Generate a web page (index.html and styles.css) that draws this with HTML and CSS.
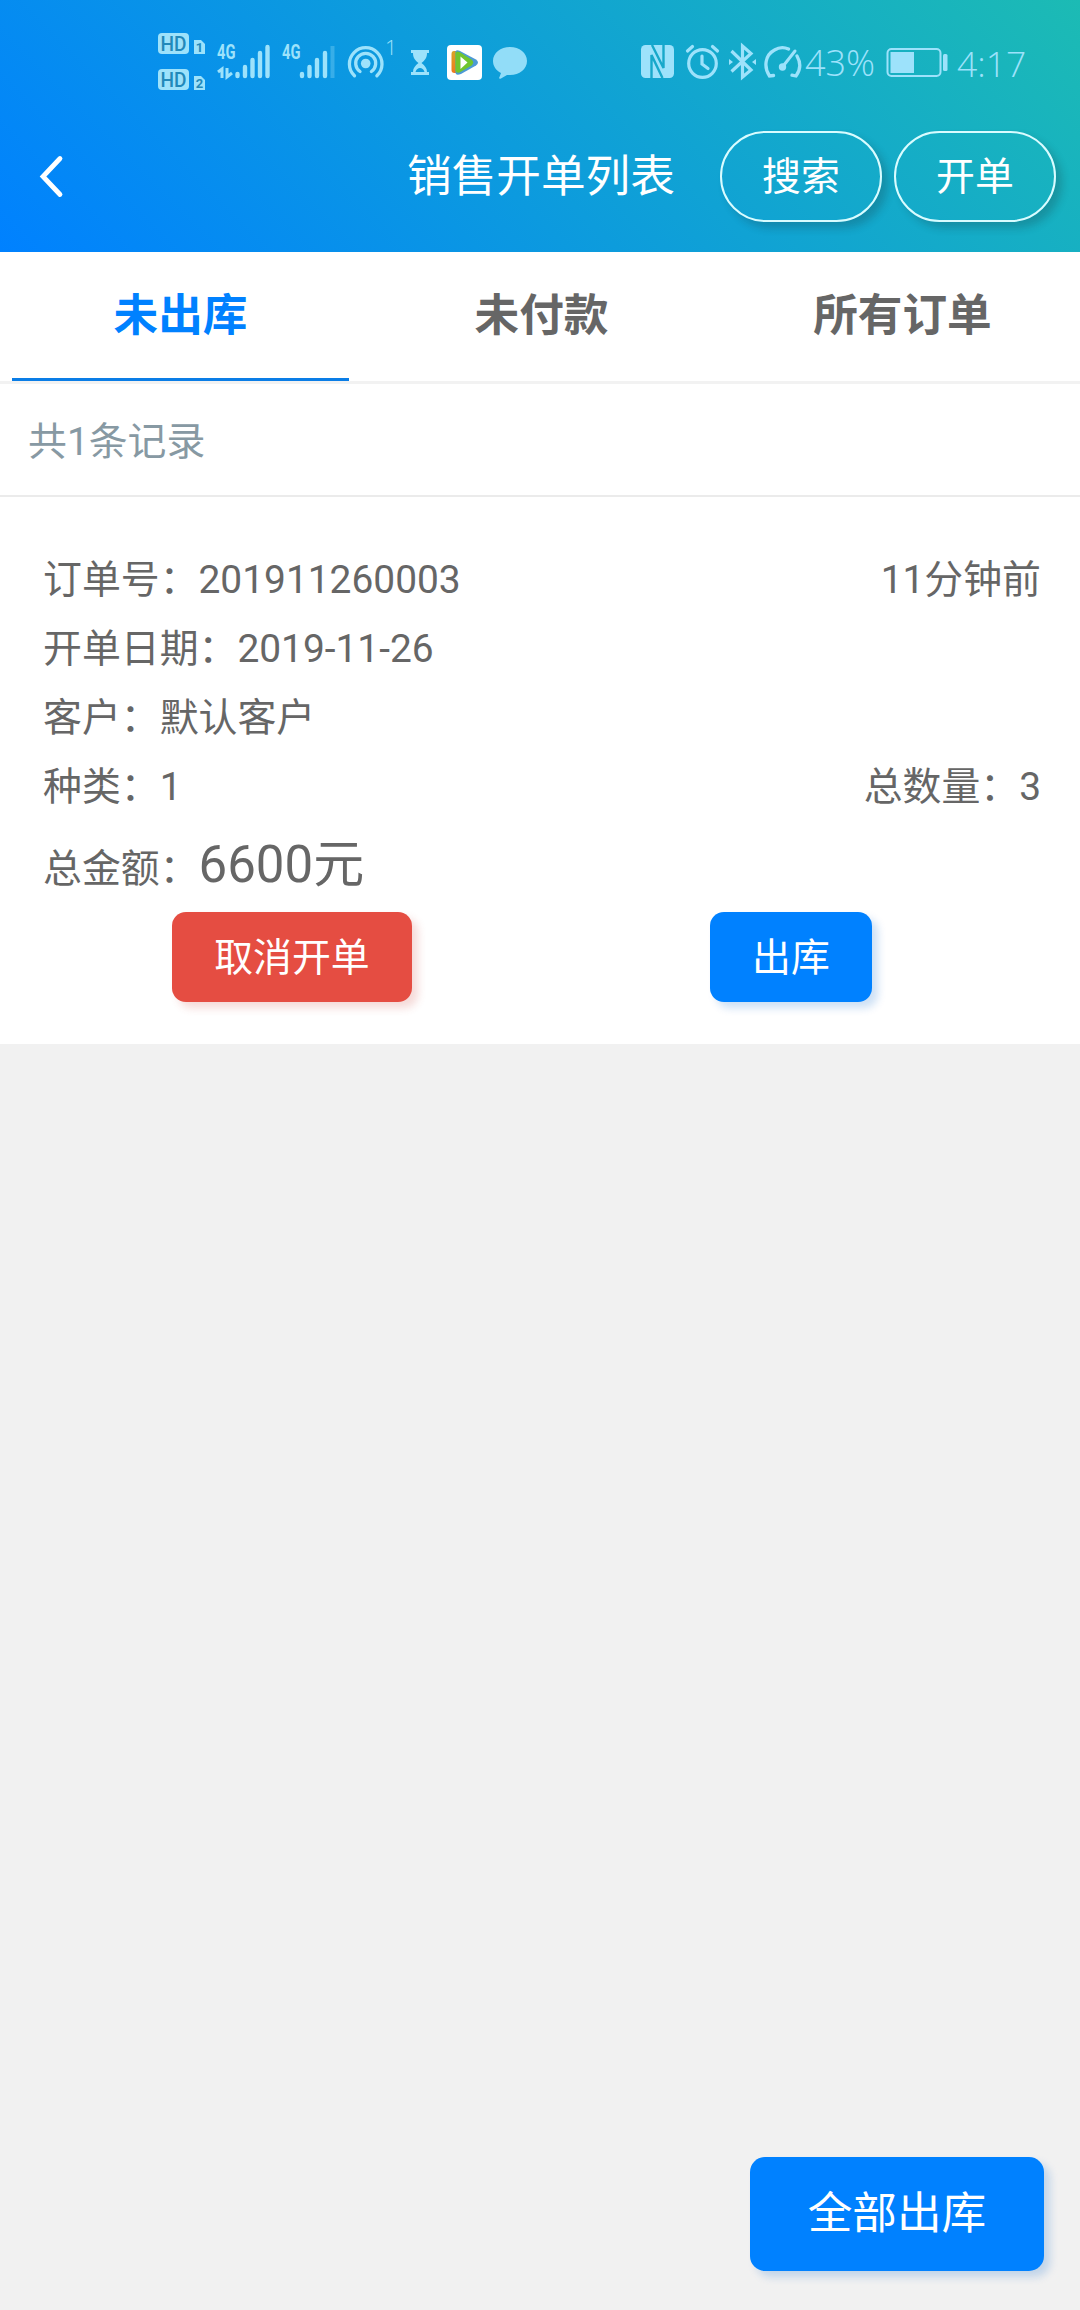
FILE: index.html
```html
<!DOCTYPE html>
<html lang="zh-CN">
<head>
<meta charset="utf-8">
<title>销售开单列表</title>
<link rel="stylesheet" href="styles.css">
</head>
<body>
<header class="header">
  <div class="status">
    <svg width="60" height="80" viewBox="150 20 60 80">
      <rect x="158" y="33" width="31" height="21" rx="4" fill="currentColor"/>
      <text x="173.500" y="50.500" class="hd" text-anchor="middle" textLength="26" lengthAdjust="spacingAndGlyphs">HD</text>
      <path d="M194 40h7l4 4v10h-11z" fill="currentColor"/>
      <text x="199.500" y="52" class="sim" text-anchor="middle">1</text>
      <rect x="158" y="69" width="31" height="21" rx="4" fill="currentColor"/>
      <text x="173.500" y="86.500" class="hd" text-anchor="middle" textLength="26" lengthAdjust="spacingAndGlyphs">HD</text>
      <path d="M194 76h7l4 4v10h-11z" fill="currentColor"/>
      <text x="199.500" y="88" class="sim" text-anchor="middle">2</text>
    </svg>
    <svg width="65" height="80" viewBox="210 20 65 80">
      <text x="217" y="59" class="net" textLength="18.500" lengthAdjust="spacingAndGlyphs">4G</text>
      <path d="M218 72l4-3v9M227 68v9l5-4" fill="none" stroke="currentColor" stroke-width="3"/>
      <path d="M237.500 74v2M245 67v9M252.500 60v16M260 53v23M267.500 47v29" stroke="currentColor" stroke-width="4.400" stroke-linecap="round"/>
    </svg>
    <svg width="65" height="80" viewBox="275 20 65 80">
      <text x="282" y="59" class="net" textLength="18.500" lengthAdjust="spacingAndGlyphs">4G</text>
      <path d="M302 74v2M309.500 67v9M317 60v16M325 53v23" stroke="currentColor" stroke-width="4.400" stroke-linecap="round"/>
      <path d="M332.500 46v32" stroke="currentColor" stroke-width="4" opacity=".3"/>
    </svg>
    <svg width="60" height="80" viewBox="340 20 60 80">
      <circle cx="365.700" cy="63.500" r="4.800" fill="currentColor"/>
      <path d="M360 71.500a10 10 0 1 1 11.400 0M354.500 75.800a16.300 16.300 0 1 1 22.400 0" fill="none" stroke="currentColor" stroke-width="3.300" stroke-linecap="round"/>
      <text x="385" y="55" class="thin-small">1</text>
    </svg>
    <svg width="40" height="80" viewBox="400 20 40 80">
      <path d="M411 50h18v3h-2c0 5-2 7-5.500 10 3.500 3 5.500 5 5.500 9h2v3h-18v-3h2c0-4 2-6 5.500-9-3.500-3-5.500-5-5.500-10h-2zM415.500 72h9c-1-3-2.500-4-4.500-4s-3.500 1-4.500 4z" fill="currentColor" fill-rule="evenodd"/>
    </svg>
    <svg width="50" height="80" viewBox="440 20 50 80">
      <defs>
        <linearGradient id="play-left" x1="0" y1="0" x2="0" y2="1"><stop offset="0" stop-color="#d9a426"/><stop offset="1" stop-color="#f0781e"/></linearGradient>
      </defs>
      <rect x="447" y="45" width="35" height="35" rx="4" fill="#fff"/>
      <path d="M454 51q-2.500 0-2.500 3v16q0 3 3 3h5v-22z" fill="url(#play-left)"/>
      <path d="M455.500 51.500q1-2 4-.8l16.500 8.800q4 3 0 6l-15 8.500q-5 2-5.500-1z" fill="#4d9ad5"/>
      <path d="M455.500 53q1-2.500 4-1l12 7.500q3.500 3 0 6l-12 7q-3.500 1-4-2z" fill="#70c52f"/>
      <path d="M460.500 56.500l7 6-7 6.500z" fill="#fff"/>
    </svg>
    <svg width="60" height="80" viewBox="490 20 60 80">
      <path d="M510 47c9.500 0 17 6 17 14s-7.500 14-17 14h-3l-6 3.500c-1.500.8-2.500 0-1.500-1.500l1.500-4c-5-2.500-8-7-8-12 0-8 7.500-14 17-14z" fill="currentColor" opacity=".92"/>
    </svg>
    <svg class="status-right" width="50" height="80" viewBox="635 20 50 80">
      <rect x="641" y="45" width="33" height="33" rx="4.500" fill="currentColor"/>
      <path d="M651.500 78V55l11 23M663.500 45v23L652 45" fill="none" stroke="#18a8ca" stroke-width="2.400" stroke-linejoin="bevel"/>
    </svg>
    <svg width="40" height="80" viewBox="685 20 40 80">
      <g fill="none" stroke="currentColor" stroke-width="3.200" stroke-linecap="round">
        <circle cx="702.500" cy="63.500" r="13.800"/>
        <path d="M702 56v8l6 4.500M687.500 51l5-4.500M717.500 51l-5-4.500"/>
      </g>
    </svg>
    <svg width="36" height="80" viewBox="725 20 36 80">
      <path d="M731.500 51l19.500 19-8.500 7v-31l8.500 7.500-19.500 18" fill="none" stroke="currentColor" stroke-width="3.200"/>
      <path d="M729 59l4 3-4 3zM756 59l-4 3 4 3z" fill="currentColor"/>
    </svg>
    <svg width="42" height="80" viewBox="761 20 42 80">
      <g fill="none" stroke="currentColor" stroke-width="3.300" stroke-linecap="round">
        <path d="M773.500 75.500l-4 .5c-6-9-4.500-21 5-26 4.500-2.800 9.500-3 14-1M797 56c4 7 3.500 14-1 20l-4-.8"/>
        <path d="M784 65l11-14" stroke-width="3"/>
      </g>
      <circle cx="782.500" cy="67" r="3.700" fill="currentColor"/>
    </svg>
    <span class="pct">43%</span>
    <svg width="74" height="80" viewBox="880 20 74 80">
      <rect x="887.500" y="49" width="53" height="27" rx="4" fill="none" stroke="currentColor" stroke-width="2"/>
      <rect x="890.500" y="52" width="23.500" height="21" fill="currentColor"/>
      <rect x="943" y="54" width="4.500" height="17" rx="1.500" fill="currentColor"/>
    </svg>
    <span class="clock">4:17</span>
  </div>
  <div class="navbar">
    <svg class="back" width="26" height="46" viewBox="0 0 26 46"><path d="M22 4.500L5 22.500l17 18" fill="none" stroke="#fff" stroke-width="4.800" stroke-linecap="round"/></svg>
    <h1 class="title">销售开单列表</h1>
    <div class="nav-actions">
      <button class="pill">搜索</button>
      <button class="pill">开单</button>
    </div>
  </div>
</header>
<nav class="tabs">
  <a class="tab active">未出库</a>
  <a class="tab">未付款</a>
  <a class="tab">所有订单</a>
</nav>
<div class="count">共1条记录</div>
<section class="order">
  <div class="row"><span>订单号：201911260003</span><span>11分钟前</span></div>
  <div class="row"><span>开单日期：2019-11-26</span></div>
  <div class="row"><span>客户：默认客户</span></div>
  <div class="row"><span>种类：1</span><span>总数量：3</span></div>
  <div class="row total"><span>总金额：<span class="amount">6600元</span></span></div>
  <div class="actions">
    <button class="btn red">取消开单</button>
    <button class="btn blue">出库</button>
  </div>
</section>
<footer class="footer"><button class="btn blue large">全部出库</button></footer>
</body>
</html>
```

FILE: styles.css
```css
* { box-sizing: border-box; }

body {
  margin: 0;
  width: 1080px;
  height: 2310px;
  display: flex;
  flex-direction: column;
  background: #f1f1f1;
  color: #666;
  font: 38.88px/69px Roboto, "Noto Sans CJK SC", sans-serif;
}

button { font: inherit; color: #fff; border: 0; padding: 0; }

.header {
  height: 252px;
  background: linear-gradient(45deg, #0081ff, #1cbbb4);
  color: #fff;
}

.status {
  display: flex;
  height: 100px;
  padding: 20px 0 0 150px;
  color: #9de2fb;
}
.status svg { flex: none; display: block; }
.status-right { margin-left: 85px; }
.pct, .clock {
  font: 300 36px/80px "Open Sans", "Noto Sans", sans-serif;
  padding-top: 3px;
  white-space: nowrap;
}
.pct { width: 77px; padding-left: 2px; }
.clock { padding-left: 3px; font-size: 35.5px; }
.hd { font: 500 20px Roboto, sans-serif; fill: #2289ba; }
.sim { font: bold 13px Roboto, sans-serif; fill: #2289ba; }
.net { font: bold 20px Roboto, sans-serif; fill: currentColor; }
.thin-small { font: 300 21px "Open Sans", sans-serif; fill: currentColor; }

.navbar {
  display: grid;
  grid-template-columns: 407px 1fr auto;
  align-items: center;
  height: 152px;
  padding: 1px 24px 0 0;
}
.back { margin-left: 38px; }
.title { margin: 0; padding-top: 2px; font-size: 44.64px; font-weight: 400; }
.nav-actions { display: flex; gap: 12px; }
.pill {
  width: 162px;
  height: 91px;
  border: 2px solid #d9fcff;
  border-radius: 46px;
  background: transparent;
  box-shadow: 6px 6px 9px rgba(26, 26, 26, .2);
}

.tabs {
  display: flex;
  height: 132px;
  background: #fff;
  border-bottom: 3px solid #f2f2f2;
}
.tab {
  flex: none;
  width: 337px;
  margin: 0 12px;
  height: 129px;
  line-height: 128px;
  text-align: center;
  font-size: 44.64px;
  font-weight: 700;
}
.tab.active { color: #0081ff; border-bottom: 3px solid #0a7de6; }

.count {
  height: 113px;
  padding-left: 28px;
  line-height: 115px;
  background: #fff;
  border-bottom: 2px solid #ebebeb;
  color: #8799a3;
}

.order {
  height: 547px;
  padding: 48px 39px 0 43px;
  background: #fff;
}
.row { display: flex; justify-content: space-between; height: 69px; white-space: nowrap; }
.row.total { height: 91px; line-height: 88px; }
.amount { font-size: 51px; }
.actions { display: grid; grid-template-columns: 538px 1fr; padding-left: 129px; }

.btn { border-radius: 14px; height: 90px; }
.red { width: 240px; background: #e54d42; box-shadow: 6px 6px 9px rgba(204, 69, 59, .2); }
.blue { width: 162px; background: #0081ff; box-shadow: 6px 6px 9px rgba(0, 102, 204, .2); }
.footer { margin-top: auto; padding: 0 36px 39px; display: flex; justify-content: flex-end; }
.large { width: 294px; height: 114px; font-size: 44.64px; border-radius: 15px; }
```
